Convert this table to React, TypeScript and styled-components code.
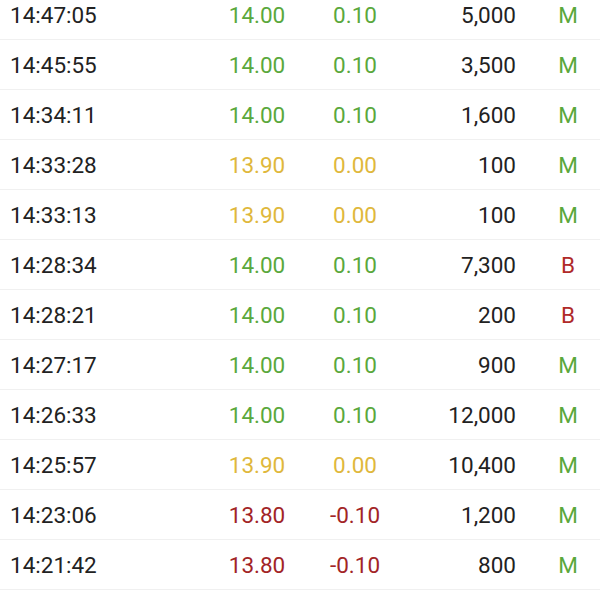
import React from "react";
import styled, { createGlobalStyle } from "styled-components";

const GlobalStyle = createGlobalStyle`
  html, body { margin: 0; padding: 0; background: #ffffff; overflow: hidden; }
  body { font-family: Roboto, "Noto Sans", "Liberation Sans", sans-serif; }
`;

type Tone = "up" | "flat" | "down";

const toneColor: Record<Tone, string> = {
  up: "#5aa83c",
  flat: "#dfb83c",
  down: "#a22426",
};

const List = styled.div`
  width: 600px;
  margin-top: -10px;
`;

const Row = styled.div`
  display: grid;
  grid-template-columns: 200px 114px 82px 120px 84px;
  align-items: center;
  height: 49px;
  padding-top: 2px;
  box-sizing: border-box;
  height: 50px;
  border-bottom: 1px solid #f0f0f0;
  font-size: 22.5px;
  line-height: 47px;
`;

const Time = styled.div`
  padding-left: 10px;
  color: #222222;
`;

const Price = styled.div<{ $tone: Tone }>`
  text-align: center;
  color: ${(p) => toneColor[p.$tone]};
`;

const Volume = styled.div`
  text-align: right;
  color: #222222;
`;

const Side = styled.div<{ $buy: boolean }>`
  padding-left: 20px;
  text-align: center;
  color: ${(p) => (p.$buy ? "#b02a2a" : "#5aa83c")};
`;

const trades: { t: string; p: string; c: string; v: string; s: "M" | "B"; tone: Tone }[] = [
  { t: "14:47:05", p: "14.00", c: "0.10", v: "5,000", s: "M", tone: "up" },
  { t: "14:45:55", p: "14.00", c: "0.10", v: "3,500", s: "M", tone: "up" },
  { t: "14:34:11", p: "14.00", c: "0.10", v: "1,600", s: "M", tone: "up" },
  { t: "14:33:28", p: "13.90", c: "0.00", v: "100", s: "M", tone: "flat" },
  { t: "14:33:13", p: "13.90", c: "0.00", v: "100", s: "M", tone: "flat" },
  { t: "14:28:34", p: "14.00", c: "0.10", v: "7,300", s: "B", tone: "up" },
  { t: "14:28:21", p: "14.00", c: "0.10", v: "200", s: "B", tone: "up" },
  { t: "14:27:17", p: "14.00", c: "0.10", v: "900", s: "M", tone: "up" },
  { t: "14:26:33", p: "14.00", c: "0.10", v: "12,000", s: "M", tone: "up" },
  { t: "14:25:57", p: "13.90", c: "0.00", v: "10,400", s: "M", tone: "flat" },
  { t: "14:23:06", p: "13.80", c: "-0.10", v: "1,200", s: "M", tone: "down" },
  { t: "14:21:42", p: "13.80", c: "-0.10", v: "800", s: "M", tone: "down" },
];

export default function App() {
  return (
    <>
      <GlobalStyle />
      <List>
        {trades.map((r, i) => (
          <Row key={i}>
            <Time>{r.t}</Time>
            <Price $tone={r.tone}>{r.p}</Price>
            <Price $tone={r.tone}>{r.c}</Price>
            <Volume>{r.v}</Volume>
            <Side $buy={r.s === "B"}>{r.s}</Side>
          </Row>
        ))}
      </List>
    </>
  );
}
